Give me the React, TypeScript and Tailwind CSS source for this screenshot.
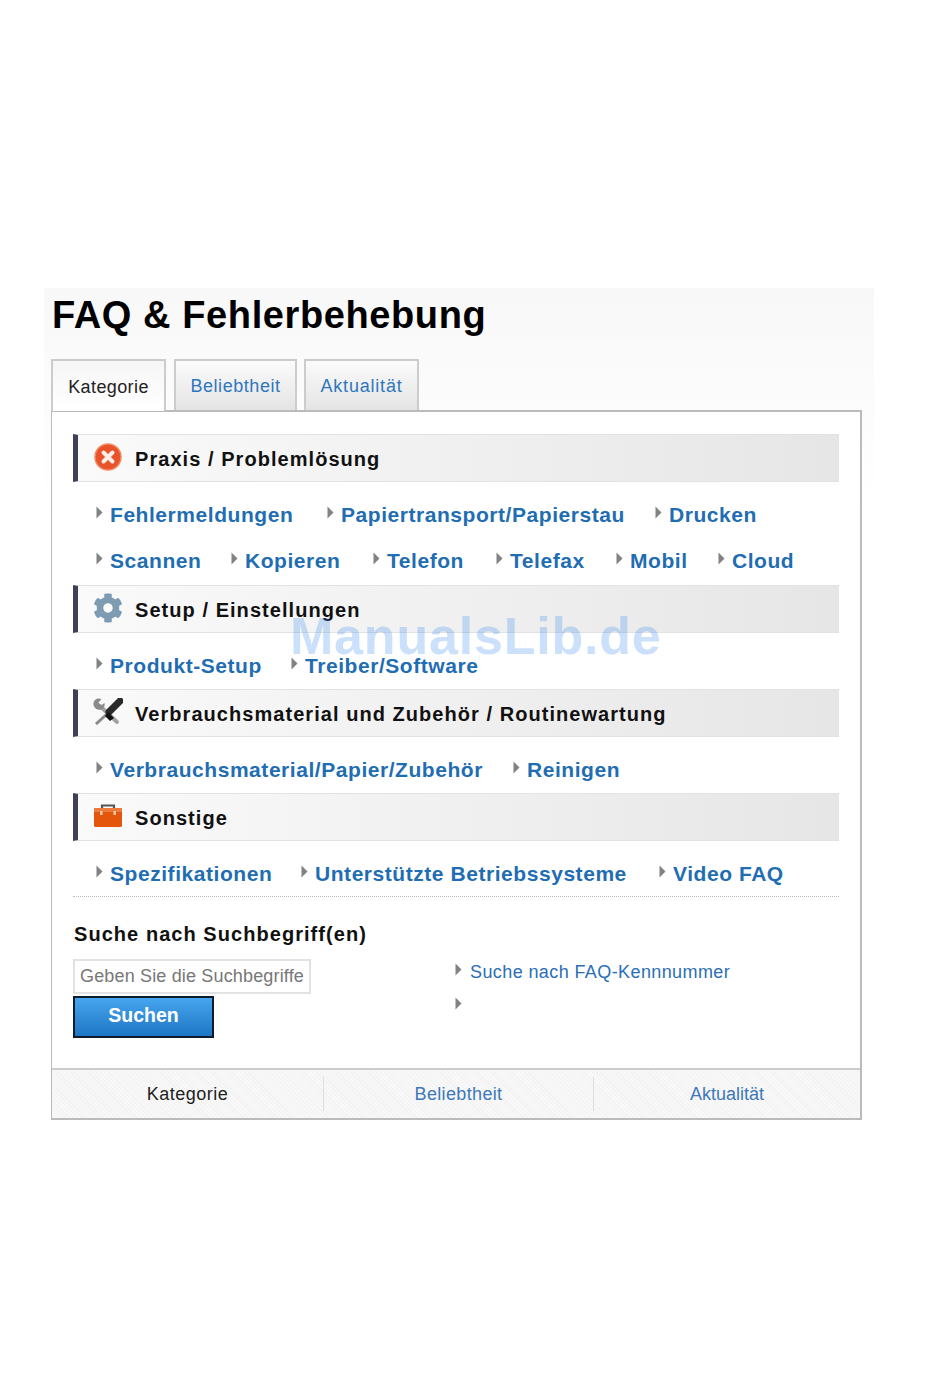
import { FaCog } from "react-icons/fa";

interface LinkData {
  label: string;
  w: string;
}

interface SectionProps {
  title: string;
  icon: React.ReactNode;
  rows: LinkData[][];
}

function Arrow() {
  return (
    <svg width="7" height="13" viewBox="0 0 7 13" className="shrink-0 mb-[6px]">
      <path d="M0.5 0.5 L6.5 6.5 L0.5 12.5 Z" fill="#828282" />
    </svg>
  );
}

function LinkItem({ label, w }: LinkData) {
  return (
    <a className={`flex items-center gap-[7px] text-[#1f6db3] text-[21px] font-bold tracking-[0.55px] whitespace-nowrap ${w}`}>
      <Arrow />
      <span>{label}</span>
    </a>
  );
}

function ErrorIcon() {
  return (
    <svg width="28" height="28" viewBox="0 0 28 28">
      <circle cx="14" cy="14" r="13" fill="#e8532a" />
      <circle cx="14" cy="14" r="13" fill="none" stroke="#f08a63" strokeWidth="1.5" />
      <path d="M9.5 9.5 L18.5 18.5 M18.5 9.5 L9.5 18.5" stroke="#fdeee8" strokeWidth="4" strokeLinecap="round" />
    </svg>
  );
}

function ToolsIcon() {
  return (
    <svg width="31" height="27" viewBox="0 0 31 27">
      <path d="M8 8 L25 24" stroke="#a3a3a3" strokeWidth="4" strokeLinecap="round" />
      <path d="M1.5 5 C2 1 6 -0.5 9.5 1 L6.5 4.5 L9 7.5 L12.5 5 C13.5 9 10 12.5 6 11.5 C3 11 1 8 1.5 5 Z" fill="#8b8b8b" />
      <path d="M15 16 L4 26" stroke="#8a8a8a" strokeWidth="3" />
      <path d="M28 3 L17 14" stroke="#2a2a2a" strokeWidth="7" strokeLinecap="round" />
      <path d="M16 14 L22 20 L18 23 L13 18 Z" fill="#111" />
    </svg>
  );
}

function ToolboxIcon() {
  return (
    <svg width="28" height="23" viewBox="0 0 28 23">
      <path d="M8 5 V1.5 H20 V5" fill="none" stroke="#555" strokeWidth="2.2" />
      <rect x="0" y="4" width="28" height="19" rx="1.5" fill="#e4560c" />
      <rect x="0" y="4" width="28" height="4" fill="#ee7a3c" />
      <rect x="6" y="7" width="2.5" height="4" fill="#f5c9ae" />
      <rect x="19.5" y="7" width="2.5" height="4" fill="#f5c9ae" />
    </svg>
  );
}

function Section({ title, icon, rows }: SectionProps) {
  return (
    <div>
      <div className="h-[48px] flex items-center border-l-[5px] border-l-[#3d4058] border-y border-y-[#e2e2e2] bg-gradient-to-r from-[#fafafa] to-[#e6e6e6]">
        <div className="w-[57px] flex justify-center items-center pl-[2px] -mt-[3px] shrink-0">{icon}</div>
        <h3 className="text-[20px] font-bold text-[#111] tracking-[1.05px] pt-[2px]">{title}</h3>
      </div>
      <div className="pt-[10px] pl-[23px]">
        {rows.map((row) => (
          <div key={row[0].label} className="h-[46px] flex items-center">
            {row.map((item) => (
              <LinkItem key={item.label} label={item.label} w={item.w} />
            ))}
          </div>
        ))}
      </div>
    </div>
  );
}

export default function App() {
  return (
    <div className="min-h-[1376px] bg-white pt-[288px] pl-[44px] font-['Liberation_Sans',Arial,sans-serif]">
      <div className="relative w-[830px] bg-gradient-to-b from-[#f8f8f8] from-0% to-white to-[220px] pl-[7px] pt-[1px]">
        <h1 className="text-[38px] leading-[50px] font-bold text-black tracking-[0.6px] pt-[1px] pl-[1px]">FAQ &amp; Fehlerbehebung</h1>

        <div className="flex items-end mt-[19px] h-[51px] relative z-10">
          <div className="w-[115px] h-[52px] -mb-[1px] mr-[8px] border-x-2 border-t-2 border-[#ccc] border-b-0 bg-gradient-to-b from-[#f6f6f6] to-white flex items-center justify-center text-[18px] text-[#222] tracking-[0.4px] pt-[2px]">
            Kategorie
          </div>
          <div className="w-[123px] h-[51px] mr-[7px] border-2 border-b-0 border-[#ccc] bg-gradient-to-b from-[#fbfbfb] to-[#e4e4e4] flex items-center justify-center text-[18px] text-[#2f77bd] tracking-[0.55px] pt-[2px]">
            Beliebtheit
          </div>
          <div className="w-[115px] h-[51px] border-2 border-b-0 border-[#ccc] bg-gradient-to-b from-[#fbfbfb] to-[#e4e4e4] flex items-center justify-center text-[18px] text-[#2f77bd] tracking-[0.8px] pt-[2px]">
            Aktualität
          </div>
        </div>

        <div className="w-[811px] border-2 border-[#bbb] border-l border-r-2 bg-white">
          <div className="pt-[22px] px-[21px]">
            <Section
              title="Praxis / Problemlösung"
              icon={<ErrorIcon />}
              rows={[
                [
                  { label: "Fehlermeldungen", w: "w-[231px]" },
                  { label: "Papiertransport/Papierstau", w: "w-[328px]" },
                  { label: "Drucken", w: "w-auto" },
                ],
                [
                  { label: "Scannen", w: "w-[135px]" },
                  { label: "Kopieren", w: "w-[142px]" },
                  { label: "Telefon", w: "w-[123px]" },
                  { label: "Telefax", w: "w-[120px]" },
                  { label: "Mobil", w: "w-[102px]" },
                  { label: "Cloud", w: "w-auto" },
                ],
              ]}
            />
            <div className="mt-[1px]">
              <Section
                title="Setup / Einstellungen"
                icon={<FaCog size={30} color="#7d9cb1" />}
                rows={[
                  [
                    { label: "Produkt-Setup", w: "w-[195px]" },
                    { label: "Treiber/Software", w: "w-auto" },
                  ],
                ]}
              />
            </div>
            <Section
              title="Verbrauchsmaterial und Zubehör / Routinewartung"
              icon={<ToolsIcon />}
              rows={[
                [
                  { label: "Verbrauchsmaterial/Papier/Zubehör", w: "w-[417px]" },
                  { label: "Reinigen", w: "w-auto" },
                ],
              ]}
            />
            <Section
              title="Sonstige"
              icon={<ToolboxIcon />}
              rows={[
                [
                  { label: "Spezifikationen", w: "w-[205px]" },
                  { label: "Unterstützte Betriebssysteme", w: "w-[358px]" },
                  { label: "Video FAQ", w: "w-auto" },
                ],
              ]}
            />
            <div className="border-t border-dotted border-[#bbb] -mt-[1px]" />

            <div className="flex pt-[24px] h-[171px]">
              <div className="w-[382px] shrink-0">
                <h4 className="text-[20px] leading-[26px] font-bold text-[#111] tracking-[1.05px] pl-[1px]">
                  Suche nach Suchbegriff(en)
                </h4>
                <div className="mt-[12px] w-[238px] h-[35px] border-2 border-[#e2e2e2] flex items-center pl-[5px] text-[18px] tracking-[0.16px] text-[#777] whitespace-nowrap overflow-hidden">
                  Geben Sie die Suchbegriffe
                </div>
                <button className="block mt-[2px] w-[141px] h-[42px] border-2 border-[#0d1b2a] bg-gradient-to-b from-[#47a5ee] to-[#1c76c4] text-white text-[19.5px] font-bold pb-[3px]">
                  Suchen
                </button>
              </div>
              <div className="pt-[34px] text-[18px] tracking-[0.4px]">
                <div className="flex items-center gap-[8px] h-[34px] text-[#2a6fb5]">
                  <Arrow />
                  <span>Suche nach FAQ-Kennnummer</span>
                </div>
                <div className="flex items-center h-[35px]">
                  <Arrow />
                </div>
              </div>
            </div>
          </div>

          <div className="h-[50px] border-t-2 border-[#ccc] bg-[#f5f5f5] bg-[repeating-linear-gradient(45deg,#f2f2f2_0,#f2f2f2_1px,#f8f8f8_1px,#f8f8f8_3px)] flex items-center text-[18px]">
            <div className="w-[272px] h-[34px] flex items-center justify-center text-[#222] border-r border-[#ddd] tracking-[0.5px]">Kategorie</div>
            <div className="w-[270px] h-[34px] flex items-center justify-center text-[#3d78b8] border-r border-[#ddd] tracking-[0.35px]">Beliebtheit</div>
            <div className="flex-1 flex items-center justify-center text-[#3d78b8]">Aktualität</div>
          </div>
        </div>

        <div className="absolute left-[246px] top-[318px] text-[52px] leading-[60px] font-bold text-[#2f86ee]/25 whitespace-nowrap tracking-[0.8px]">
          ManualsLib.de
        </div>
      </div>
    </div>
  );
}
